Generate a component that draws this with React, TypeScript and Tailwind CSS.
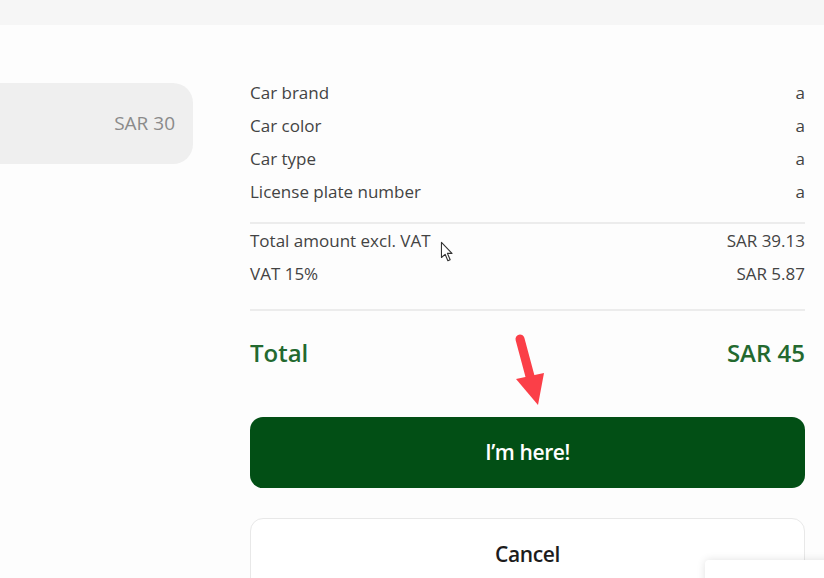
const rows = [
  { label: "Car brand", value: "a" },
  { label: "Car color", value: "a" },
  { label: "Car type", value: "a" },
  { label: "License plate number", value: "a" },
]

const amounts = [
  { label: "Total amount excl. VAT", value: "SAR 39.13" },
  { label: "VAT 15%", value: "SAR 5.87" },
]

function Row({ label, value }: { label: string; value: string }) {
  return (
    <div className="flex h-[33px] items-center justify-between text-[17px] text-[#434343]">
      <span>{label}</span>
      <span>{value}</span>
    </div>
  )
}

export default function App() {
  return (
    <div
      className="relative h-[578px] w-[824px] overflow-hidden bg-[#fdfdfd]"
      style={{ fontFamily: '"Open Sans", "Noto Sans", sans-serif' }}
    >
      <div className="h-[25px] bg-[#f6f6f6]" />

      <div className="flex">
        {/* previous step card, mostly off screen */}
        <div className="mt-[58px] flex h-[81px] w-[193px] shrink-0 items-center justify-end rounded-r-[20px] bg-[#efefef] pr-[18px] text-[19px] text-[#8a8a8a]">
          SAR 30
        </div>

        <div className="ml-[57px] w-[555px] pt-[51px]">
          {rows.map((r) => (
            <Row key={r.label} {...r} />
          ))}

          <div className="mt-[14px] h-[2px] bg-[#ececec]" />

          {amounts.map((r) => (
            <Row key={r.label} {...r} />
          ))}

          <div className="mt-[19px] h-[2px] bg-[#ececec]" />

          <div className="mt-[27px] flex h-[30px] items-center justify-between text-[24px] font-semibold text-[#23692f]">
            <span>Total</span>
            <span>SAR 45</span>
          </div>

          <button className="mt-[49px] flex h-[71px] w-full items-center justify-center rounded-[13px] bg-[#024f15] text-[21px] font-semibold tracking-[-0.4px] text-white">
            I’m here!
          </button>

          <button className="mt-[30px] flex h-[74px] w-full items-center justify-center rounded-[13px] border border-[#e8e8e8] bg-white text-[21px] font-semibold tracking-[-0.4px] text-[#1c1c1c]">
            Cancel
          </button>
        </div>
      </div>

      {/* toast peeking in at the corner */}
      <div className="absolute left-[705px] top-[560px] h-[40px] w-[140px] rounded-tl-[4px] bg-white shadow-[0_0_8px_rgba(0,0,0,0.12)]" />

      {/* mouse cursor */}
      <svg className="absolute left-[440px] top-[241px]" width="13" height="22" viewBox="0 0 14 24">
        <path
          d="M1.5 1.5 L1.5 18 L5.5 14.5 L8.5 21.5 L11 20.5 L8 13.5 L13 13.5 Z"
          fill="#fff"
          stroke="#333"
          strokeWidth="1.2"
          strokeLinejoin="round"
        />
      </svg>

      {/* annotation arrow */}
      <svg className="absolute left-[505px] top-[330px]" width="50" height="85" viewBox="0 0 50 85">
        <line x1="15" y1="9" x2="26" y2="50" stroke="#fb3f48" strokeWidth="9" strokeLinecap="round" />
        <polygon points="11,49 39,43 33,75" fill="#fb3f48" />
      </svg>
    </div>
  )
}
